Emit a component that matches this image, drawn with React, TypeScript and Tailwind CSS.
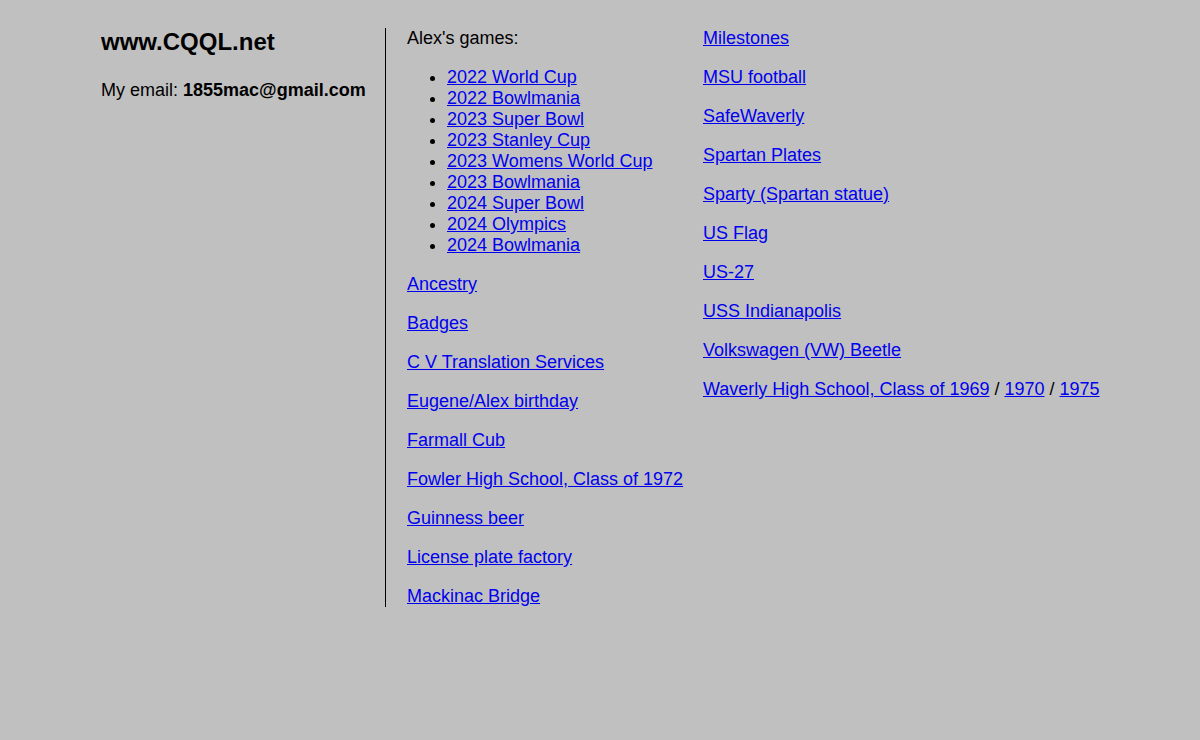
import React from 'react';

const games = [
  '2022 World Cup',
  '2022 Bowlmania',
  '2023 Super Bowl',
  '2023 Stanley Cup',
  '2023 Womens World Cup',
  '2023 Bowlmania',
  '2024 Super Bowl',
  '2024 Olympics',
  '2024 Bowlmania',
];

const middleLinks = [
  'Ancestry',
  'Badges',
  'C V Translation Services',
  'Eugene/Alex birthday',
  'Farmall Cub',
  'Fowler High School, Class of 1972',
  'Guinness beer',
  'License plate factory',
  'Mackinac Bridge',
];

const rightLinks = [
  'Milestones',
  'MSU football',
  'SafeWaverly',
  'Spartan Plates',
  'Sparty (Spartan statue)',
  'US Flag',
  'US-27',
  'USS Indianapolis',
  'Volkswagen (VW) Beetle',
];

const Link: React.FC<{ children: React.ReactNode }> = ({ children }) => (
  <a href="#" className="text-[#0000ee] underline">
    {children}
  </a>
);

export default function App() {
  return (
    <div
      className="min-h-[740px] bg-[#c0c0c0] text-[18px] leading-[21px] text-black"
      style={{ fontFamily: '"Liberation Sans", Arial, sans-serif' }}
    >
      <div className="flex pl-[101px] pt-[28px]">
        {/* left column */}
        <div className="w-[285px] shrink-0 border-r border-black">
          <h1 className="text-[24px] leading-[28px] font-bold">www.CQQL.net</h1>
          <p className="mt-[24px]">
            My email: <b>1855mac@gmail.com</b>
          </p>
        </div>

        {/* middle column */}
        <div className="w-[317px] shrink-0 pl-[21px]">
          <p>Alex's games:</p>
          <ul className="mt-[18px] list-disc pl-[40px]">
            {games.map((g) => (
              <li key={g}>
                <Link>{g}</Link>
              </li>
            ))}
          </ul>
          {middleLinks.map((l) => (
            <p key={l} className="mt-[18px]">
              <Link>{l}</Link>
            </p>
          ))}
        </div>

        {/* right column */}
        <div className="flex flex-col gap-[18px]">
          {rightLinks.map((l) => (
            <p key={l}>
              <Link>{l}</Link>
            </p>
          ))}
          <p>
            <Link>Waverly High School, Class of 1969</Link> / <Link>1970</Link> /{' '}
            <Link>1975</Link>
          </p>
        </div>
      </div>
    </div>
  );
}
